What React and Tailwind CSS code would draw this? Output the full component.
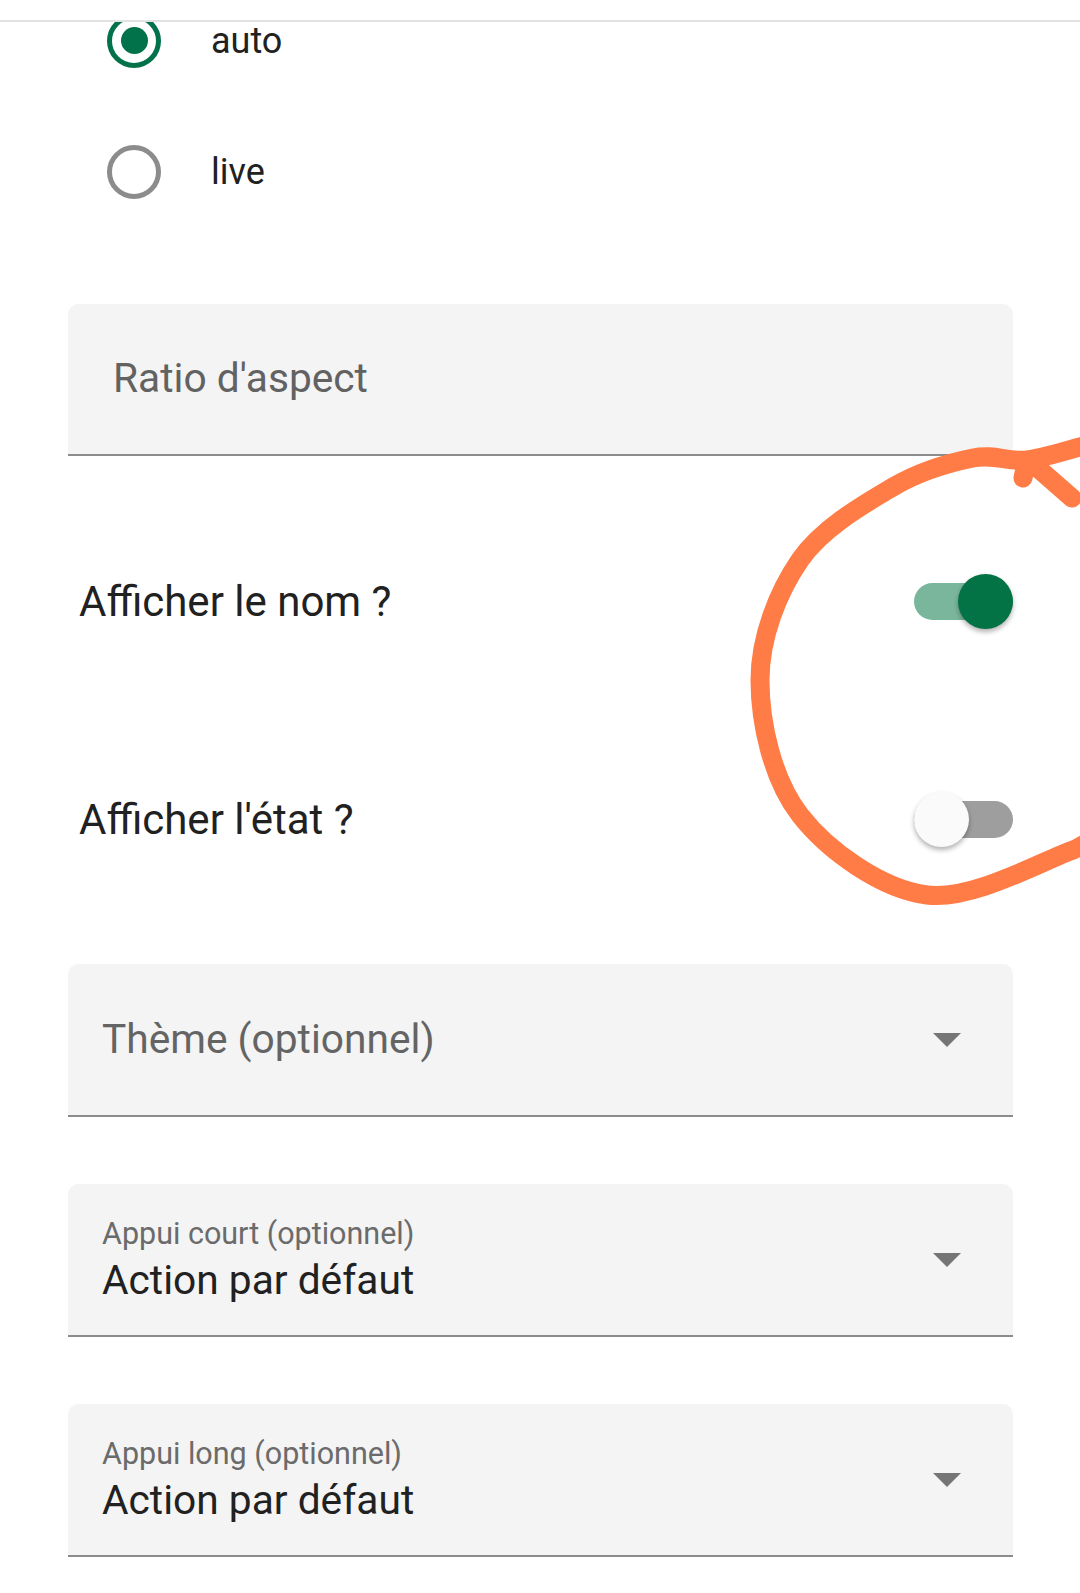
import { useState } from 'react'

const font = { fontFamily: 'Roboto, "Noto Sans", sans-serif' }

function Radio({ checked, label }) {
  return (
    <div className="flex items-center h-[131px] pl-[39px]">
      <span
        className={
          checked
            ? 'flex items-center justify-center w-[54px] h-[54px] rounded-full border-[5px] border-[#02724a]'
            : 'flex items-center justify-center w-[54px] h-[54px] rounded-full border-[5px] border-[#8c8c8c]'
        }
      >
        {checked && <span className="w-[27px] h-[27px] rounded-full bg-[#02724a]"></span>}
      </span>
      <span className="ml-[50px] text-[36px] text-[#212121]">{label}</span>
    </div>
  )
}

function Toggle({ on, label }) {
  return (
    <div className="flex items-center justify-between h-[218px] pl-[11px]">
      <span className="text-[42px] text-[#212121]">{label}</span>
      <div className="relative w-[99px] h-[55px] flex items-center">
        <div className={on ? 'w-full h-[37px] rounded-full bg-[#7ab69c]' : 'w-full h-[37px] rounded-full bg-[#9e9e9e]'}></div>
        <div
          className={
            on
              ? 'absolute right-0 top-0 w-[55px] h-[55px] rounded-full bg-[#037245] shadow-[0_3px_5px_rgba(0,0,0,0.3)]'
              : 'absolute left-0 top-0 w-[55px] h-[55px] rounded-full bg-[#fafafa] shadow-[0_3px_5px_rgba(0,0,0,0.3)]'
          }
        ></div>
      </div>
    </div>
  )
}

function Arrow() {
  return (
    <svg width="28" height="14" viewBox="0 0 28 14" className="mr-[52px] shrink-0">
      <path d="M0 0 L28 0 L14 14 Z" fill="#757575" />
    </svg>
  )
}

function Select({ label, value }) {
  return (
    <div className="flex items-center justify-between h-[153px] rounded-t-[10px] bg-[#f4f4f4] border-b-2 border-[#8c8c8c] pl-[34px]">
      {value ? (
        <div className="flex flex-col mb-[6px]">
          <span className="h-[46px] leading-[46px] text-[30.5px] text-[#6b6b6b]">{label}</span>
          <span className="h-[46px] leading-[46px] text-[40.7px] text-[#212121]">{value}</span>
        </div>
      ) : (
        <span className="text-[40.7px] text-[#646464]">{label}</span>
      )}
      <Arrow />
    </div>
  )
}

export default function App() {
  const [mode] = useState('auto')

  return (
    <div className="relative w-[1080px] h-[1593px] bg-white overflow-hidden" style={font}>
      <div className="h-[22px] bg-white border-b-2 border-[#e2e2e2] relative z-10"></div>

      <div className="pr-[67px] pl-[68px]">
        <div className="-mt-[47px]">
          <Radio checked={mode === 'auto'} label="auto" />
          <Radio checked={mode === 'live'} label="live" />
        </div>

        <div className="mt-[67px] flex items-center h-[152px] rounded-t-[10px] bg-[#f4f4f4] border-b-2 border-[#8c8c8c] pl-[45px]">
          <span className="text-[40.7px] text-[#626262]">Ratio d'aspect</span>
        </div>

        <div className="mt-[36px]">
          <Toggle on label="Afficher le nom ?" />
          <Toggle on={false} label="Afficher l'état ?" />
        </div>

        <div className="mt-[36px] flex flex-col gap-[67px]">
          <Select label="Thème (optionnel)" />
          <Select label="Appui court (optionnel)" value="Action par défaut" />
          <Select label="Appui long (optionnel)" value="Action par défaut" />
        </div>
      </div>

      {/* hand-drawn marker around the switches */}
      <svg className="absolute left-0 top-0 pointer-events-none z-20" width="1080" height="1593" viewBox="0 0 1080 1593">
        <g fill="none" stroke="#ff7c46" strokeWidth="19" strokeLinecap="round" strokeLinejoin="round">
          <path d="M1090 444 C1079.5 446.7 1046.5 457.7 1027 460 C1007.5 462.3 995.3 453.5 973 458 C950.7 462.5 921.8 470 893 487 C864.2 504 822.2 527.8 800 560 C777.8 592.2 760 637.5 760 680 C760 722.5 772.2 779.2 800 815 C827.8 850.8 881.5 889.2 927 895 C972.5 900.8 1044.2 860 1073 850 C1077.5 848 1095 838 1100 835" />
          <path d="M1023 478 L1026 464" />
          <path d="M1032 463 L1072 498" />
        </g>
      </svg>
    </div>
  )
}
